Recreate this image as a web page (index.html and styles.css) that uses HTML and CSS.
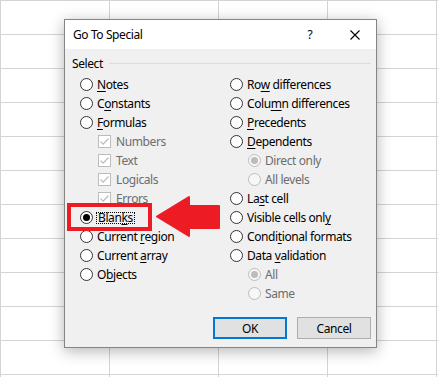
FILE: index.html
```html
<!DOCTYPE html>
<html lang="en">
<head>
    <meta charset="UTF-8">
    <title>Go To Special</title>
    <link rel="stylesheet" href="styles.css">
</head>
<body>
    <div class="dialog">
        <div class="titlebar">
            <span class="title">Go To Special</span>
            <span class="help">?</span>
            <svg class="close" width="10" height="10" viewBox="0 0 10 10">
                <path d="M0.5 0.5 L9.5 9.5 M9.5 0.5 L0.5 9.5" stroke="#000" stroke-width="1.1" fill="none"/>
            </svg>
        </div>
        <div class="content">
            <div class="group-head">
                <span>Select</span>
                <span class="rule"></span>
            </div>
            <div class="cols">
                <div class="col">
                    <div class="opt"><span class="radio"></span><span><u>N</u>otes</span></div>
                    <div class="opt"><span class="radio"></span><span>C<u>o</u>nstants</span></div>
                    <div class="opt"><span class="radio"></span><span><u>F</u>ormulas</span></div>
                    <div class="opt sub off"><span class="check"><svg width="11" height="11" viewBox="0 0 11 11"><path d="M1.5 5.5 L4.2 8.2 L9.5 2.5" stroke="#bcbcbc" stroke-width="1.2" fill="none"/></svg></span><span>Numbers</span></div>
                    <div class="opt sub off"><span class="check"><svg width="11" height="11" viewBox="0 0 11 11"><path d="M1.5 5.5 L4.2 8.2 L9.5 2.5" stroke="#bcbcbc" stroke-width="1.2" fill="none"/></svg></span><span>Text</span></div>
                    <div class="opt sub off"><span class="check"><svg width="11" height="11" viewBox="0 0 11 11"><path d="M1.5 5.5 L4.2 8.2 L9.5 2.5" stroke="#bcbcbc" stroke-width="1.2" fill="none"/></svg></span><span>Logicals</span></div>
                    <div class="opt sub off"><span class="check"><svg width="11" height="11" viewBox="0 0 11 11"><path d="M1.5 5.5 L4.2 8.2 L9.5 2.5" stroke="#bcbcbc" stroke-width="1.2" fill="none"/></svg></span><span>Errors</span></div>
                    <div class="opt"><span class="radio on"></span><span class="focus">Blan<u>k</u>s</span></div>
                    <div class="opt"><span class="radio"></span><span>Current <u>r</u>egion</span></div>
                    <div class="opt"><span class="radio"></span><span>Current <u>a</u>rray</span></div>
                    <div class="opt"><span class="radio"></span><span>O<u>b</u>jects</span></div>
                </div>
                <div class="col">
                    <div class="opt"><span class="radio"></span><span>Ro<u>w</u> differences</span></div>
                    <div class="opt"><span class="radio"></span><span>Colu<u>m</u>n differences</span></div>
                    <div class="opt"><span class="radio"></span><span><u>P</u>recedents</span></div>
                    <div class="opt"><span class="radio"></span><span><u>D</u>ependents</span></div>
                    <div class="opt sub off"><span class="radio on"></span><span>Direct only</span></div>
                    <div class="opt sub off"><span class="radio"></span><span>All levels</span></div>
                    <div class="opt"><span class="radio"></span><span>La<u>s</u>t cell</span></div>
                    <div class="opt"><span class="radio"></span><span>Visible cells onl<u>y</u></span></div>
                    <div class="opt"><span class="radio"></span><span>Condi<u>t</u>ional formats</span></div>
                    <div class="opt"><span class="radio"></span><span>Data <u>v</u>alidation</span></div>
                    <div class="opt sub off"><span class="radio on"></span><span>All</span></div>
                    <div class="opt sub off"><span class="radio"></span><span>Same</span></div>
                </div>
            </div>
            <div class="buttons">
                <button class="btn default">OK</button>
                <button class="btn">Cancel</button>
            </div>
        </div>
    </div>

    <!-- callout drawn over the dialog -->
    <div class="mark-box"></div>
    <svg class="mark-arrow" width="75" height="52" viewBox="150 190 75 52">
        <polygon points="157,216.5 189,197 189,206 219,206 219,228 189,228 189,236" fill="#ed1c24" stroke="#ed1c24" stroke-width="2" stroke-linejoin="round"/>
    </svg>
</body>
</html>
```

FILE: styles.css
```css
body {
    margin: 0;
    padding: 19px 0 0 64px;
    width: 438px;
    height: 377px;
    box-sizing: border-box;
    overflow: hidden;
    position: relative;
    font-family: "Noto Sans", sans-serif;
    font-size: 12px;
    letter-spacing: -0.4px;
    color: #000;
    background-color: #fff;
    background-image:
        linear-gradient(to right, #d4d4d4 1px, transparent 1px),
        linear-gradient(to bottom, #d4d4d4 1px, transparent 1px);
    background-size: 109px 34px;
}
.dialog {
    width: 311px;
    height: 327px;
    border: 1px solid #858585;
    background: #f0f0f0;
    box-shadow: 0 3px 14px rgba(0, 0, 0, 0.3);
}
.titlebar {
    height: 29px;
    background: #fff;
    display: flex;
    align-items: center;
    padding-left: 8px;
}
.title {
    flex: 1;
}
.help {
    width: 10px;
    text-align: center;
    margin-right: 35px;
}
.close {
    margin-right: 16px;
}
.content {
    padding: 6px 5px 0 7px;
}
.group-head {
    display: flex;
    align-items: center;
    height: 16px;
    gap: 6px;
}
.rule {
    flex: 1;
    height: 1px;
    background: #dcdcdc;
}
.cols {
    display: grid;
    grid-template-columns: 150px 1fr;
    padding-left: 8px;
    margin-top: 4px;
}
.opt {
    height: 19px;
    display: flex;
    align-items: center;
    white-space: nowrap;
}
.opt u {
    text-decoration-thickness: 1px;
    text-underline-offset: 2px;
}
.sub {
    padding-left: 18px;
}
.off {
    color: #6d6d6d;
}
.radio {
    width: 13px;
    height: 13px;
    box-sizing: border-box;
    border: 1px solid #333;
    border-radius: 50%;
    background: #fff;
    margin-right: 4px;
    display: flex;
    align-items: center;
    justify-content: center;
    flex: none;
}
.radio.on::after {
    content: "";
    width: 7px;
    height: 7px;
    border-radius: 50%;
    background: #000;
}
.off .radio {
    border-color: #bcbcbc;
    background: #f7f7f7;
}
.off .radio.on::after {
    background: #bcbcbc;
}
.check {
    width: 13px;
    height: 13px;
    box-sizing: border-box;
    border: 1px solid #bcbcbc;
    background: #fff;
    margin-right: 5px;
    display: flex;
    align-items: center;
    justify-content: center;
    flex: none;
}
.check svg {
    display: block;
}
.focus {
    line-height: 10px;
    border: 1px dotted #000;
    padding: 0 1px;
    margin-left: -1px;
}
.buttons {
    display: flex;
    justify-content: flex-end;
    gap: 10px;
    margin-top: 14px;
}
.btn {
    width: 74px;
    height: 22px;
    box-sizing: border-box;
    border: 1px solid #adadad;
    background: #e1e1e1;
    font-family: inherit;
    font-size: 12px;
    letter-spacing: inherit;
    color: #000;
    padding: 0;
}
.btn.default {
    border: 2px solid #0078d7;
}
.mark-box {
    position: absolute;
    left: 67px;
    top: 203px;
    width: 85px;
    height: 28px;
    box-sizing: border-box;
    border: 4px solid #ed1c24;
}
.mark-arrow {
    position: absolute;
    left: 150px;
    top: 190px;
}
```
